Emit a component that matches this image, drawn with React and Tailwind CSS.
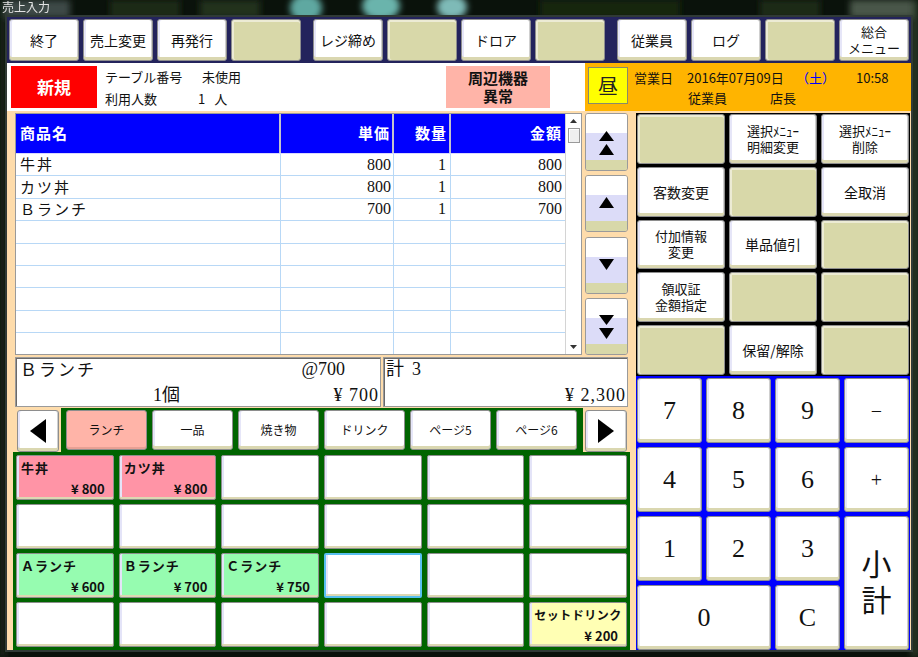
import React from "react";

const CJK = "font-['Noto_Sans_CJK_JP',sans-serif]";
const SERIF = "font-['Liberation_Serif','Noto_Sans_CJK_JP',serif]";

const whiteBtn =
  "bg-white border border-[#8e8e8e] rounded-[3px] shadow-[inset_0_-3px_0_#dad7b0,inset_2px_0_0_#e6e6f8,inset_-1px_0_0_#cfcfcf]";
const khakiBtn =
  "bg-[#d8d8a9] border border-[#8e8e8e] rounded-[3px] shadow-[inset_0_2px_0_#ecebd4,inset_2px_0_0_#ecebd4]";

function Wallpaper() {
  return (
    <svg className="absolute inset-0" width="918" height="657" viewBox="0 0 918 657">
      <defs>
        <filter id="soft" x="-20%" y="-20%" width="140%" height="140%">
          <feGaussianBlur stdDeviation="3" />
        </filter>
      </defs>
      <rect width="918" height="657" fill="#0a120b" />
      <g filter="url(#soft)">
        <rect x="0" y="0" width="70" height="18" fill="#3e4846" />
        <rect x="110" y="0" width="70" height="18" fill="#1b2c13" />
        <rect x="200" y="0" width="60" height="18" fill="#22301a" />
        <ellipse cx="306" cy="8" rx="16" ry="14" fill="#5ea8a1" />
        <ellipse cx="381" cy="6" rx="19" ry="14" fill="#6bb4ac" />
        <ellipse cx="452" cy="7" rx="15" ry="12" fill="#7ebab7" />
        <rect x="540" y="0" width="140" height="18" fill="#17250e" />
        <rect x="760" y="0" width="60" height="18" fill="#1f2a18" />
        <rect x="850" y="0" width="68" height="18" fill="#48574a" />
        <rect x="912" y="0" width="6" height="657" fill="#33402f" />
        <rect x="0" y="0" width="5" height="657" fill="#1d2a1e" />
      </g>
    </svg>
  );
}

function ToolBtn({ label, blank, extra = "" }) {
  if (blank) return <div className={`w-[70px] h-[42px] ${khakiBtn} ${extra}`} />;
  return (
    <div
      className={`w-[70px] h-[42px] ${whiteBtn} ${extra} flex items-center justify-center text-center text-[14px] leading-[16px] text-[#111]`}
    >
      {label}
    </div>
  );
}

function Toolbar() {
  return (
    <div className="h-[46px] bg-[#23235c] flex pt-[2px] pl-[2px] gap-[4px]">
      <ToolBtn label="終了" />
      <ToolBtn label="売上変更" />
      <ToolBtn label="再発行" />
      <ToolBtn blank />
      <ToolBtn label="レジ締め" extra="ml-[8px]" />
      <ToolBtn blank />
      <ToolBtn label="ドロア" />
      <ToolBtn blank />
      <ToolBtn label="従業員" extra="ml-[8px]" />
      <ToolBtn label="ログ" />
      <ToolBtn blank />
      <ToolBtn
        label={
          <span className="text-[13px] leading-[16px]">
            総合
            <br />
            メニュー
          </span>
        }
      />
    </div>
  );
}

function Header() {
  return (
    <div className="h-[48px] flex">
      <div className="w-[578px] bg-white flex items-start pt-[3px] pl-[4px]">
        <div className="w-[86px] h-[42px] bg-[#ff0000] text-white font-bold text-[17px] flex items-center justify-center">
          新規
        </div>
        <div className="ml-[8px] text-[13px] leading-[22px] text-[#111]">
          <div className="flex">
            <span className="w-[97px]">テーブル番号</span>
            <span>未使用</span>
          </div>
          <div className="flex">
            <span className="w-[93px]">利用人数</span>
            <span>1</span>
            <span className="ml-[9px]">人</span>
          </div>
        </div>
        <div className="ml-auto mr-[35px] w-[104px] h-[42px] bg-[#ffb4a8] flex items-center justify-center text-center font-bold text-[15px] leading-[18px] text-[#111]">
          周辺機器
          <br />
          異常
        </div>
      </div>
      <div className="flex-1 bg-[#ffb400] flex items-start">
        <div className="ml-[3px] mt-[4px] w-[40px] h-[37px] bg-[#ffff00] border border-[#8a8a6a] flex items-center justify-center text-[20px] text-[#222]">
          昼
        </div>
        <div className="ml-[6px] pt-[5px] text-[13px] leading-[20px] text-[#111]">
          <div className="flex">
            <span className="w-[53px]">営業日</span>
            <span className="w-[109px]">2016年07月09日</span>
            <span className="w-[60px] text-[#0000ff]">（土）</span>
            <span>10:58</span>
          </div>
          <div className="flex pl-[54px]">
            <span className="w-[82px]">従業員</span>
            <span>店長</span>
          </div>
        </div>
      </div>
    </div>
  );
}

const orderRows = [
  ["牛丼", "800", "1", "800"],
  ["カツ丼", "800", "1", "800"],
  ["Ｂランチ", "700", "1", "700"],
  ["", "", "", ""],
  ["", "", "", ""],
  ["", "", "", ""],
  ["", "", "", ""],
  ["", "", "", ""],
  ["", "", "", ""],
];

function OrderTable() {
  return (
    <div className="w-[567px] h-[242px] flex border border-[#9a9a9a] bg-white overflow-hidden">
      <div className="w-[549px] flex flex-col">
        <div className="flex h-[40px] shrink-0 bg-[#0000ff] text-white font-bold text-[15px] tracking-[1px] border-b border-[#d8d8ff]">
          <div className="w-[265px] flex items-center pl-[4px] border-r-2 border-[#c4c4cc]">商品名</div>
          <div className="w-[113px] flex items-center justify-end pr-[2px] border-r-2 border-[#c4c4cc]">単価</div>
          <div className="w-[57px] flex items-center justify-end pr-[2px] border-r-2 border-[#c4c4cc]">数量</div>
          <div className="w-[114px] flex items-center justify-end pr-[3px]">金額</div>
        </div>
        {orderRows.map((r, i) => (
          <div key={i} className="flex h-[22.4px] shrink-0 border-b border-[#b8d8f6] text-[15px] text-[#111]">
            <div className="w-[265px] flex items-center pl-[4px] border-r border-[#b8d8f6] tracking-[2px]">{r[0]}</div>
            <div className={`w-[113px] flex items-center justify-end pr-[2px] border-r border-[#b8d8f6] ${SERIF} text-[16px]`}>
              {r[1]}
            </div>
            <div className={`w-[57px] flex items-center justify-end pr-[4px] border-r border-[#b8d8f6] ${SERIF} text-[16px]`}>
              {r[2]}
            </div>
            <div className={`w-[114px] flex items-center justify-end pr-[3px] ${SERIF} text-[16px]`}>{r[3]}</div>
          </div>
        ))}
      </div>
      <div className="w-[16px] bg-white border-l border-[#d4d4d4] flex flex-col items-center">
        <svg className="mt-[5px]" width="7" height="4" viewBox="0 0 7 4">
          <polygon points="3.5,0 7,4 0,4" fill="#333" />
        </svg>
        <div className="mt-[5px] w-[12px] h-[15px] border border-[#9a9a9a] bg-[#efefef] shadow-[inset_1px_1px_0_#ffffff]" />
        <div className="flex-1" />
        <svg className="mb-[5px]" width="7" height="4" viewBox="0 0 7 4">
          <polygon points="0,0 7,0 3.5,4" fill="#333" />
        </svg>
      </div>
    </div>
  );
}

function ScrollBtn({ h, tris }) {
  return (
    <div
      className={`relative w-[43px] ${h} border border-[#9a9a9a] rounded-[3px] overflow-hidden flex flex-col`}
    >
      <div className="h-[19px] bg-white" />
      <div className="flex-1 bg-[#dcdcf8]" />
      <div className="h-[10px] bg-[#d8d8a9]" />
      <svg className="absolute inset-0" width="41" height="56" viewBox="0 0 41 56">
        {tris.map((p, i) => (
          <polygon key={i} points={p} fill="#000" />
        ))}
      </svg>
    </div>
  );
}

function ScrollButtons() {
  return (
    <div className="ml-[3px] h-[242px] flex flex-col justify-between">
      <ScrollBtn h="h-[58px]" tris={["20.5,17 28,27 13,27", "20.5,30 28,41 13,41"]} />
      <ScrollBtn h="h-[57px]" tris={["20.5,21 28,32 13,32"]} />
      <ScrollBtn h="h-[57px]" tris={["13,21 28,21 20.5,32"]} />
      <ScrollBtn h="h-[57px]" tris={["13,16 28,16 20.5,26", "13,29 28,29 20.5,40"]} />
    </div>
  );
}

function InfoBar() {
  return (
    <div className={`mt-[2px] h-[50px] flex gap-[2px] text-[18px] leading-[20px] text-[#111] ${SERIF}`}>
      <div className="w-[366px] bg-white border border-[#9a9a9a] shadow-[inset_1px_1px_0_#6a6a6a] flex flex-col justify-between pt-[1px] pb-[1px]">
        <div className="flex pl-[4px]">
          <span className={`${CJK} text-[17px] tracking-[2px]`}>Ｂランチ</span>
          <span className="ml-auto mr-[35px]">@700</span>
        </div>
        <div className="flex pl-[137px] pr-[1px]">
          <span>1個</span>
          <span className="ml-auto tracking-[1px]">¥ 700</span>
        </div>
      </div>
      <div className="flex-1 bg-white border border-[#9a9a9a] shadow-[inset_1px_1px_0_#6a6a6a] flex flex-col justify-between pt-[1px] pb-[1px]">
        <div className="flex pl-[2px]">
          <span>計</span>
          <span className="ml-[8px]">3</span>
        </div>
        <div className="flex justify-end pr-[1px] tracking-[1px]">¥ 2,300</div>
      </div>
    </div>
  );
}

function SideArrow({ dir, extra }) {
  return (
    <div className={`w-[42px] h-[42px] mt-[2px] ${whiteBtn} ${extra} flex items-center justify-center`}>
      <svg width="18" height="24" viewBox="0 0 18 24">
        {dir === "left" ? (
          <polygon points="17,0 17,24 1,12" fill="#000" />
        ) : (
          <polygon points="1,0 1,24 17,12" fill="#000" />
        )}
      </svg>
    </div>
  );
}

const tabs = ["ランチ", "一品", "焼き物", "ドリンク", "ページ5", "ページ6"];

function TabRow() {
  return (
    <div className="mt-[1px] h-[44px] flex">
      <SideArrow dir="left" extra="ml-[2px]" />
      <div className="ml-[2px] w-[522px] h-[44px] bg-[#006400] flex pt-[2px] pl-[5px] gap-[5px]">
        {tabs.map((t, i) => (
          <div
            key={t}
            className={`w-[81px] h-[40px] border border-[#8e8e8e] rounded-[3px] flex items-center justify-center text-[12px] text-[#111] ${
              i === 0
                ? "bg-[#ffb4a8] shadow-[inset_0_-2px_0_#e8a094]"
                : "bg-white shadow-[inset_0_-3px_0_#dad7b0,inset_2px_0_0_#e6e6f8]"
            }`}
          >
            {t}
          </div>
        ))}
      </div>
      <SideArrow dir="right" extra="ml-[2px]" />
    </div>
  );
}

const items = [
  { n: "牛丼", p: "¥ 800", c: "pink" },
  { n: "カツ丼", p: "¥ 800", c: "pink" },
  {}, {}, {}, {},
  {}, {}, {}, {}, {}, {},
  { n: "Ａランチ", p: "¥ 600", c: "green" },
  { n: "Ｂランチ", p: "¥ 700", c: "green" },
  { n: "Ｃランチ", p: "¥ 750", c: "green" },
  { focus: true }, {}, {},
  {}, {}, {}, {}, {},
  { n: "セットドリンク", p: "¥ 200", c: "yellow", tight: true },
];

const itemBg = {
  pink: "bg-[#ff94a6]",
  green: "bg-[#96fcb0]",
  yellow: "bg-[#ffffb4]",
};

function ItemGrid() {
  return (
    <div className="-ml-[2px] w-[617px] h-[198px] bg-[#006400] p-[3px] grid grid-cols-6 grid-rows-4 gap-x-[5px] gap-y-[4px]">
      {items.map((it, i) => {
        const base = it.c ? itemBg[it.c] : "bg-white";
        const border = it.focus ? "border-2 border-[#58bff0]" : "border border-[#8e8e8e]";
        return (
          <div
            key={i}
            className={`${base} ${border} rounded-[2px] overflow-hidden shadow-[inset_0_-2px_0_#dcd8b2,inset_2px_0_0_#e4e4f8] flex flex-col justify-between pt-[4px] pb-[2px] pl-[4px] pr-[8px] leading-[16px] font-bold text-[#111]`}
          >
            {it.n ? (
              <>
                <span
                  className={`whitespace-nowrap ${
                    it.tight ? "text-[12px] tracking-[0.5px]" : "text-[13px] tracking-[1px]"
                  }`}
                >
                  {it.n}
                </span>
                <span className="self-end text-[13px]">{it.p}</span>
              </>
            ) : null}
          </div>
        );
      })}
    </div>
  );
}

const fnKeys = [
  null, ["選択ﾒﾆｭｰ", "明細変更"], ["選択ﾒﾆｭｰ", "削除"],
  ["客数変更"], null, ["全取消"],
  ["付加情報", "変更"], ["単品値引"], null,
  ["領収証", "金額指定"], null, null,
  null, ["保留/解除"], null,
];

function FunctionKeys() {
  return (
    <div className="h-[263px] bg-black p-[1px] grid grid-cols-3 grid-rows-5 gap-x-[4px] gap-y-[3px]">
      {fnKeys.map((k, i) =>
        k ? (
          <div
            key={i}
            className={`${whiteBtn} flex flex-col items-center justify-center ${
              k.length > 1 ? "text-[13px]" : "text-[14px]"
            } leading-[16px] text-[#111]`}
          >
            {k.map((l) => (
              <span key={l} className="block h-[16px]">
                {l}
              </span>
            ))}
          </div>
        ) : (
          <div key={i} className={khakiBtn} />
        )
      )}
    </div>
  );
}

const pad = [
  { t: "7" }, { t: "8" }, { t: "9" }, { t: "−", s: "small" },
  { t: "4" }, { t: "5" }, { t: "6" }, { t: "+", s: "small" },
  { t: "1" }, { t: "2" }, { t: "3" }, { t: "小計", s: "tall" },
  { t: "0", s: "wide" }, { t: "C" },
];

function NumPad() {
  return (
    <div className="h-[274px] bg-[#0000ff] pt-[2px] px-[1px] grid grid-cols-4 grid-rows-4 gap-[4px]">
      {pad.map((k) => (
        <div
          key={k.t}
          className={`${whiteBtn} ${SERIF} text-[#111] flex items-center justify-center text-center ${
            k.s === "wide" ? "col-span-2" : ""
          } ${k.s === "tall" ? "row-span-2 text-[30px] leading-[36px]" : ""} ${
            k.s === "small" ? "text-[20px]" : k.s === "tall" ? "" : "text-[26px]"
          }`}
        >
          {k.s === "tall" ? (
            <span>
              小
              <br />
              計
            </span>
          ) : (
            k.t
          )}
        </div>
      ))}
    </div>
  );
}

export default function App() {
  return (
    <div className={`relative w-[918px] h-[657px] overflow-hidden ${CJK}`}>
      <Wallpaper />
      <div className="absolute left-[2px] top-0 text-[12px] leading-[14px] text-[#f4f4f4] opacity-90">売上入力</div>
      <div className="absolute left-[5px] top-[15px] w-[908px] h-[637px] border-2 border-[#303a36] bg-[#fedcab] flex flex-col">
        <Toolbar />
        <Header />
        <div className="flex-1 flex pl-[8px] pt-[2px]">
          <div className="w-[613px] flex flex-col">
            <div className="flex">
              <OrderTable />
              <ScrollButtons />
            </div>
            <InfoBar />
            <TabRow />
            <ItemGrid />
          </div>
          <div className="ml-[8px] w-[274px] flex flex-col">
            <FunctionKeys />
            <NumPad />
          </div>
        </div>
      </div>
    </div>
  );
}
